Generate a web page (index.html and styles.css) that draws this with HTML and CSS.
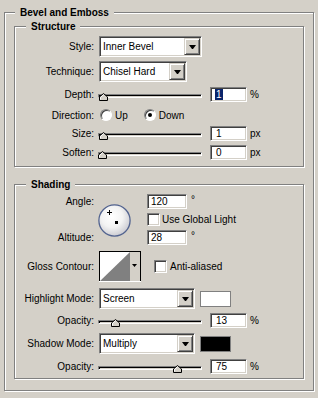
FILE: index.html
```html
<!DOCTYPE html>
<html>
<head>
<meta charset="utf-8">
<title>Bevel and Emboss</title>
<link rel="stylesheet" href="styles.css">
</head>
<body>
<fieldset class="group">
	<legend>Bevel and Emboss</legend>

	<fieldset class="sub structure">
		<legend>Structure</legend>
		<div class="row">
			<span class="lbl">Style:</span>
			<div class="combo w-style"><span class="val">Inner Bevel</span><span class="drop"></span></div>
		</div>
		<div class="row r-tech">
			<span class="lbl">Technique:</span>
			<div class="combo w-tech"><span class="val">Chisel Hard</span><span class="drop"></span></div>
		</div>
		<div class="row r-depth">
			<span class="lbl">Depth:</span>
			<div class="slider"><div class="track"></div><span class="thumb" style="left:1px"></span></div>
			<div class="edit"><span class="sel">1</span></div>
			<span class="unit">%</span>
		</div>
		<div class="row r-dir">
			<span class="lbl">Direction:</span>
			<span class="radio"></span><span class="opt">Up</span>
			<span class="radio on r-down"></span><span class="opt">Down</span>
		</div>
		<div class="row r-size">
			<span class="lbl">Size:</span>
			<div class="slider"><div class="track"></div><span class="thumb" style="left:1px"></span></div>
			<div class="edit">1</div>
			<span class="unit">px</span>
		</div>
		<div class="row r-size">
			<span class="lbl">Soften:</span>
			<div class="slider"><div class="track"></div><span class="thumb" style="left:0px"></span></div>
			<div class="edit">0</div>
			<span class="unit">px</span>
		</div>
	</fieldset>

	<fieldset class="sub shading">
		<legend>Shading</legend>
		<div class="angle">
			<span class="lbl a-angle">Angle:</span>
			<svg class="dial" width="33" height="33" viewBox="0 0 33 33">
				<defs>
					<radialGradient id="dg" cx="0.42" cy="0.38" r="0.62">
						<stop offset="0" stop-color="#ffffff"/>
						<stop offset="0.55" stop-color="#f3f3f3"/>
						<stop offset="1" stop-color="#cdcdd3"/>
					</radialGradient>
				</defs>
				<circle cx="16.5" cy="16.5" r="15.6" fill="url(#dg)" stroke="#52638f" stroke-width="1.3"/>
				<path d="M9 8.5h5M11.5 6v5" stroke="#000" stroke-width="1" shape-rendering="crispEdges"/>
				<rect x="17" y="17" width="3" height="3" fill="#000"/>
			</svg>
			<div class="edit w-ang a-in1">120</div>
			<span class="deg a-d1">°</span>
			<div class="a-cb"><span class="check"></span><span class="opt">Use Global Light</span></div>
			<span class="lbl a-alt">Altitude:</span>
			<div class="edit w-ang a-in2">28</div>
			<span class="deg a-d2">°</span>
		</div>
		<div class="row r-gloss">
			<span class="lbl">Gloss Contour:</span>
			<svg class="contour" width="42" height="31" viewBox="0 0 42 31">
				<rect x="0" y="0" width="42" height="31" fill="#d4d0c8"/>
				<rect x="1" y="1" width="30" height="29" fill="#fff"/>
				<polygon points="1,30 31,1 31,30" fill="#808080"/>
				<path d="M0.5 31V0.5H41.5V31" fill="none" stroke="#000" shape-rendering="crispEdges"/>
				<path d="M0 30.5H42" stroke="#fff" shape-rendering="crispEdges"/>
				<polygon points="33,13 38,13 35.5,16" fill="#000"/>
			</svg>
			<span class="check c-aa"></span><span class="opt">Anti-aliased</span>
		</div>
		<div class="row r-mode">
			<span class="lbl">Highlight Mode:</span>
			<div class="combo w-mode"><span class="val">Screen</span><span class="drop"></span></div>
			<span class="swatch white"></span>
		</div>
		<div class="row r-op1">
			<span class="lbl">Opacity:</span>
			<div class="slider"><div class="track"></div><span class="thumb" style="left:13px"></span></div>
			<div class="edit">13</div>
			<span class="unit">%</span>
		</div>
		<div class="row r-mode2">
			<span class="lbl">Shadow Mode:</span>
			<div class="combo w-mode"><span class="val">Multiply</span><span class="drop"></span></div>
			<span class="swatch black"></span>
		</div>
		<div class="row r-op2">
			<span class="lbl">Opacity:</span>
			<div class="slider"><div class="track"></div><span class="thumb" style="left:75px"></span></div>
			<div class="edit">75</div>
			<span class="unit">%</span>
		</div>
	</fieldset>
</fieldset>
</body>
</html>
```

FILE: styles.css
```css
*{ margin:0; padding:0; box-sizing:border-box;}
html,body{ background:#d4d0c8;}
body{ width:318px; height:398px; overflow:hidden; padding:6px 4px 0 4px; font:10px/13px "Liberation Sans",Arial,sans-serif; color:#000;}

fieldset{ border:1px solid #808080; box-shadow:inset 1px 1px 0 #fff, 1px 1px 0 #fff; min-width:0;}
legend{ font-weight:bold; line-height:13px; padding:0 5px; background:#d4d0c8;}

.group{ width:310px; padding:1px 9px 11px 9px;}
.group > legend{ margin-left:1px;}
.sub > legend{ margin-left:11px;}
.structure{ padding:3px 0 6px 0;}
.shading{ margin-top:11px; padding:3px 0 4px 0;}

.row{ display:flex; align-items:center;}
.lbl{ width:79px; margin-right:5px; text-align:right; flex:none; white-space:nowrap;}

/* combo boxes */
.combo{ display:flex; height:21px; padding:1px; background:#fff; border:1px solid; border-color:#808080 #fff #fff #808080; box-shadow:inset 1px 1px 0 #404040, inset -1px -1px 0 #d4d0c8;}
.combo .val{ flex:1; padding-left:2px; line-height:17px;}
.drop{ width:16px; height:17px; display:flex; align-items:center; justify-content:center; background:#d4d0c8; border:1px solid; border-color:#d4d0c8 #404040 #404040 #d4d0c8; box-shadow:inset 1px 1px 0 #fff, inset -1px -1px 0 #808080;}
.drop:after{ content:""; width:1px; height:0; border-top:4px solid #000; border-left:3px solid transparent; border-right:3px solid transparent;}
.w-style{ width:103px;}
.w-tech{ width:88px;}
.w-mode{ width:96px;}
.r-tech{ margin-top:4px;}

/* sliders */
.slider{ position:relative; width:104px; height:15px; margin-left:-1px; margin-right:8px; flex:none;}
.track{ margin-top:7px; height:4px; border:1px solid; border-color:#808080 #fff #fff #808080; box-shadow:inset 1px 1px 0 #000; background:#d4d0c8;}
.thumb{ position:absolute; top:6px; width:9px; height:8px; background:url("data:image/svg+xml,%3Csvg xmlns='http://www.w3.org/2000/svg' width='9' height='8'%3E%3Cpolygon points='0.5,7.5 0.5,4 4.5,0.5 8.5,4 8.5,7.5' fill='%23d4d0c8' stroke='%23000' stroke-width='1'/%3E%3Cpolyline points='1.5,6.5 1.5,4.4 4.5,1.8' fill='none' stroke='%23fff' stroke-width='1'/%3E%3C/svg%3E") no-repeat;}

/* edit fields */
.edit{ width:37px; height:15px; padding-left:5px; line-height:13px; background:#fff; border:1px solid; border-color:#808080 #fff #fff #808080; box-shadow:inset 1px 1px 0 #404040, inset -1px -1px 0 #d4d0c8; flex:none;}
.edit .sel{ background:#0a246a; color:#fff; padding:0 1px; margin-left:-1px;}
.unit{ margin-left:3px;}
.r-depth{ margin-top:5px;}
.r-size{ margin-top:4px;}

/* radios and checks */
.r-dir{ margin-top:6px; height:14px;}
.radio{ width:12px; height:12px; margin-left:1px; border-radius:50%; background:#fff; border:1px solid; border-color:#808080 #fff #fff #808080; box-shadow:inset 1px 1px 0 #404040; display:flex; align-items:center; justify-content:center; flex:none;}
.radio.on:after{ content:""; width:4px; height:4px; border-radius:50%; background:#000;}
.r-down{ margin-left:16px;}
.opt{ margin-left:3px; white-space:nowrap;}
.check{ width:13px; height:13px; background:#fff; border:1px solid; border-color:#808080 #fff #fff #808080; box-shadow:inset 1px 1px 0 #404040, inset -1px -1px 0 #d4d0c8; flex:none;}

/* angle block */
.angle{ display:grid; grid-template-columns:84px 48px 40px auto; grid-template-rows:15px 13px 15px; row-gap:4px; align-items:center;}
.angle .lbl{ margin-right:0; width:79px;}
.a-angle{ grid-column:1; grid-row:1;}
.a-alt{ grid-column:1; grid-row:3;}
.dial{ grid-column:2; grid-row:1 / 4; margin-left:-1px; margin-top:1px;}
.w-ang{ width:40px; padding-left:3px;}
.a-in1{ grid-column:3; grid-row:1;}
.a-in2{ grid-column:3; grid-row:3;}
.deg{ margin-left:4px; align-self:start; line-height:11px;}
.a-d1{ grid-column:4; grid-row:1;}
.a-d2{ grid-column:4; grid-row:3;}
.a-cb{ grid-column:3 / 5; grid-row:2; display:flex; align-items:center;}
.a-cb .opt{ margin-left:2px;}

.r-gloss{ margin-top:6px;}
.contour{ display:block; flex:none;}
.c-aa{ margin-left:13px;}

.r-mode{ margin-top:6px;}
.r-op1{ margin-top:4px;}
.r-mode2{ margin-top:5px;}
.r-op2{ margin-top:5px;}
.swatch{ width:31px; height:16px; margin-left:5px; border:1px solid #808080;}
.swatch.white{ background:#fff;}
.swatch.black{ background:#000;}
```
